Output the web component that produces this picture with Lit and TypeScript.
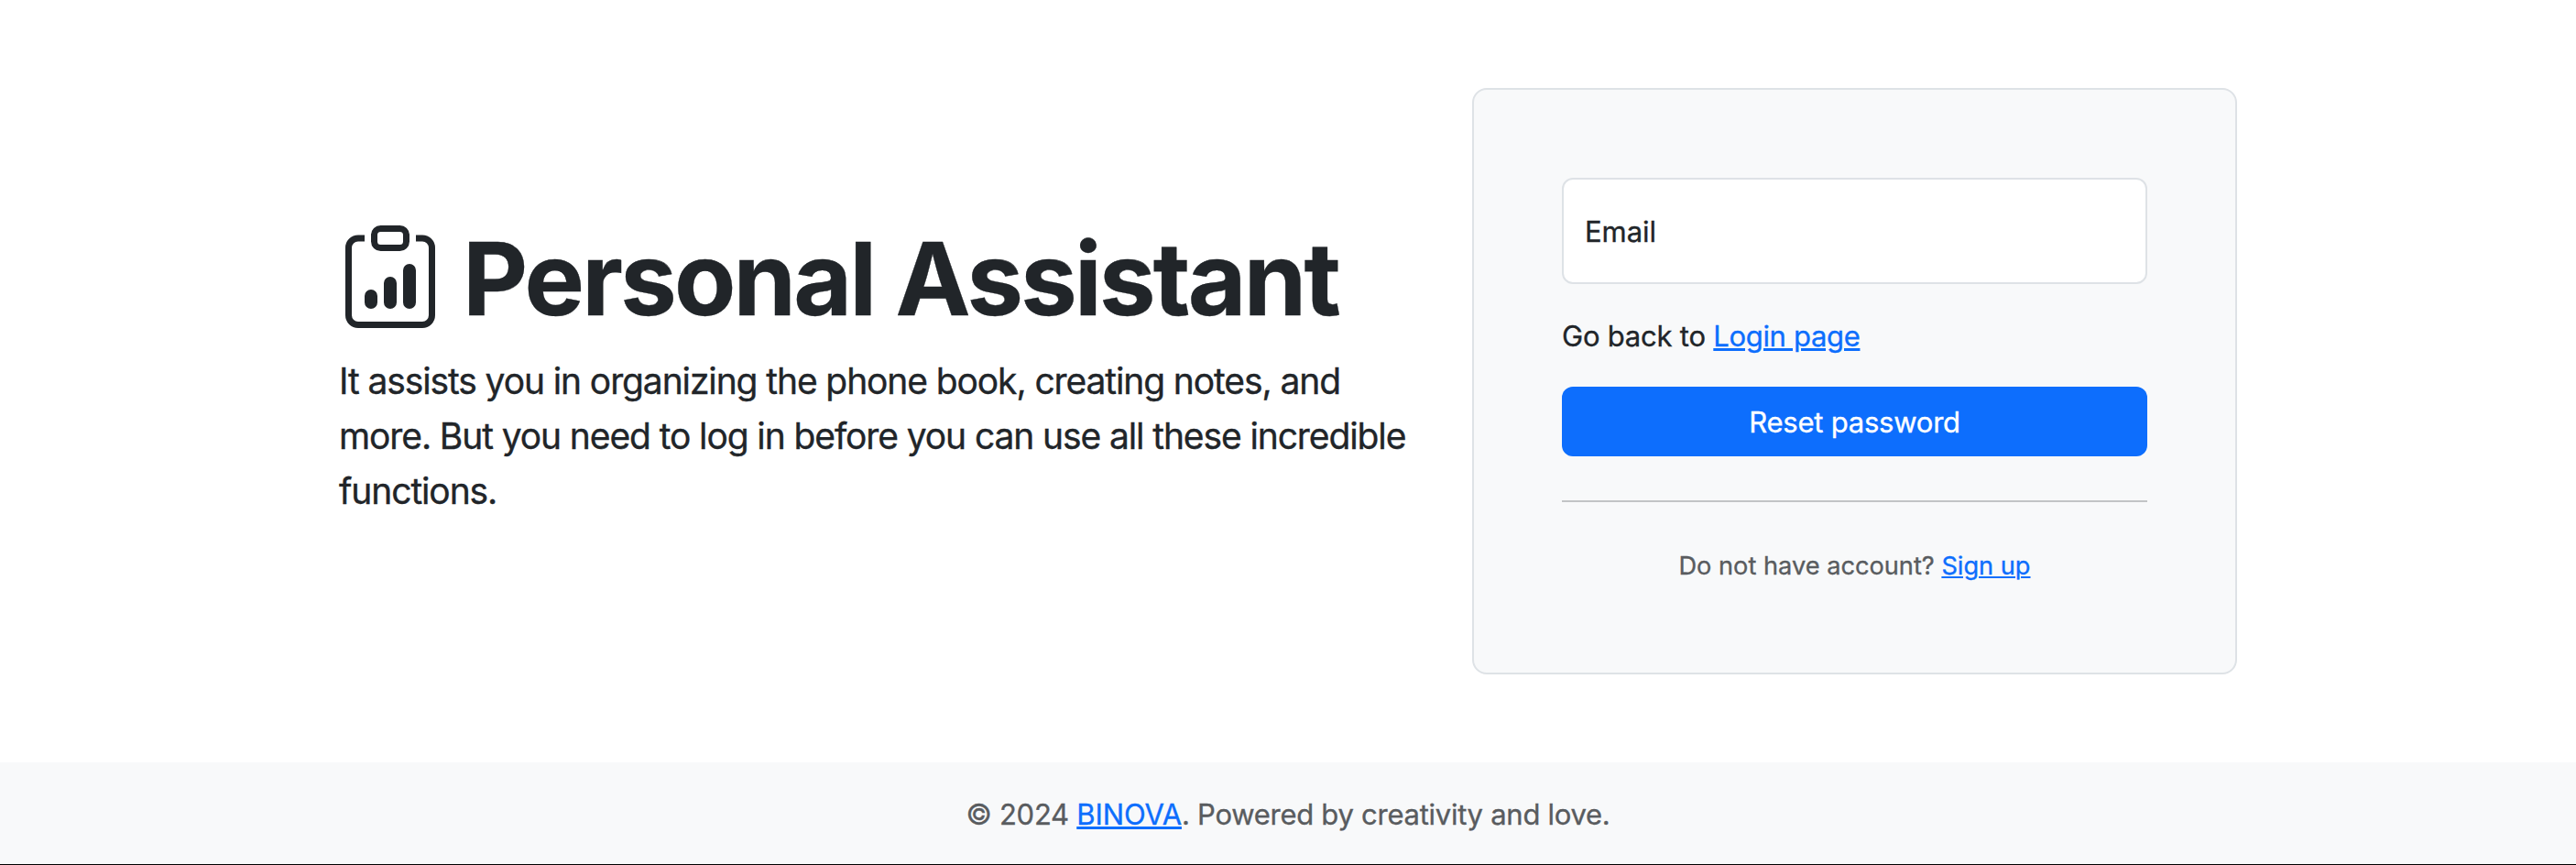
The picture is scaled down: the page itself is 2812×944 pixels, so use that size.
import { LitElement, html, css } from "lit";
import { customElement } from "lit/decorators.js";

@customElement("app-root")
class AppRoot extends LitElement {
  static styles = css`
    :host {
      display: flex;
      flex-direction: column;
      height: 944px;
      box-sizing: border-box;
      border-bottom: 1px solid #000;
      background: #fff;
      color: #212529;
      font: 400 31px/48px Inter, "Liberation Sans", sans-serif;
      letter-spacing: -0.2px;
      -webkit-text-stroke: 0.35px currentColor;
    }
    * { box-sizing: border-box; margin: 0; }
    main {
      width: 2072px;
      margin: 0 auto;
      padding: 96px 0;
      height: 832px;
      flex: none;
      display: flex;
      justify-content: space-between;
      align-items: center;
    }
    .intro { width: 1190px; padding-bottom: 20px; }
    .title { display: flex; gap: 23px; height: 112px; align-items: flex-start; }
    .title svg { width: 112px; height: 112px; flex: none; }
    h1 {
      font-size: 110px;
      line-height: 116px;
      font-weight: 700;
      letter-spacing: -2.83px;
      white-space: nowrap;
    }
    .lead {
      margin-top: 28px;
      font-size: 39px;
      line-height: 60px;
      letter-spacing: -1.11px;
    }
    .card {
      width: 835px;
      height: 640px;
      padding: 96px;
      background: #f8f9fa;
      border: 2px solid #dee2e6;
      border-radius: 16px;
    }
    .field {
      height: 116px;
      padding: 2px 23px 0;
      display: flex;
      align-items: center;
      background: #fff;
      border: 2px solid #dee2e6;
      border-radius: 12px;
      letter-spacing: -0.05px;
    }
    .back { margin: 33px 0 31px; letter-spacing: -0.22px; }
    .back a { letter-spacing: -0.33px; -webkit-text-stroke-color: #0d6efd; }
    button {
      display: block;
      width: 100%;
      height: 76px;
      padding: 2px 0 0;
      border: 0;
      border-radius: 12px;
      background: #0d6efd;
      color: #fff;
      font: inherit;
      letter-spacing: -0.22px;
      -webkit-text-stroke-color: #fff;
    }
    hr { margin: 48px 0; border: 0; height: 2px; background: #c2c4c6; }
    .signup {
      padding-top: 1px;
      font-size: 27.2px;
      line-height: 42px;
      text-align: center;
      letter-spacing: 0;
      color: #595c5f;
      -webkit-text-stroke-color: #595c5f;
    }
    a {
      color: #0d6efd;
      -webkit-text-stroke-color: #0d6efd;
      text-decoration: underline;
      text-decoration-thickness: 3px;
      text-underline-offset: 2px;
    }
    .signup a { text-decoration-thickness: 2px; }
    footer {
      height: 111px;
      padding: 33px 0 30px;
      text-align: center;
      background: #f8f9fa;
      color: #595c5f;
      -webkit-text-stroke-color: #595c5f;
      letter-spacing: -0.27px;
    }
    footer a { letter-spacing: -0.1px; }
  `;

  render() {
    return html`
      <main>
        <section class="intro">
          <div class="title">
            <svg viewBox="0 0 16 16" fill="currentColor">
              <path d="M4 11a1 1 0 1 1 2 0v1a1 1 0 1 1-2 0zm6-4a1 1 0 1 1 2 0v5a1 1 0 1 1-2 0zM7 9a1 1 0 0 1 2 0v3a1 1 0 1 1-2 0z" />
              <path d="M4 1.5H3a2 2 0 0 0-2 2V14a2 2 0 0 0 2 2h10a2 2 0 0 0 2-2V3.5a2 2 0 0 0-2-2h-1v1h1a1 1 0 0 1 1 1V14a1 1 0 0 1-1 1H3a1 1 0 0 1-1-1V3.5a1 1 0 0 1 1-1h1z" />
              <path d="M9.5 1a.5.5 0 0 1 .5.5v1a.5.5 0 0 1-.5.5h-3a.5.5 0 0 1-.5-.5v-1a.5.5 0 0 1 .5-.5zm-3-1A1.5 1.5 0 0 0 5 1.5v1A1.5 1.5 0 0 0 6.5 4h3A1.5 1.5 0 0 0 11 2.5v-1A1.5 1.5 0 0 0 9.5 0z" />
            </svg>
            <h1>Personal Assistant</h1>
          </div>
          <p class="lead">
            It assists you in organizing the phone book, creating notes, and more. But you need to
            log in before you can use all these incredible functions.
          </p>
        </section>
        <section class="card">
          <div class="field">Email</div>
          <p class="back">Go back to <a>Login page</a></p>
          <button>Reset password</button>
          <hr />
          <p class="signup">Do not have account? <a>Sign up</a></p>
        </section>
      </main>
      <footer>© 2024 <a>BINOVA</a>. Powered by creativity and love.</footer>
    `;
  }
}
